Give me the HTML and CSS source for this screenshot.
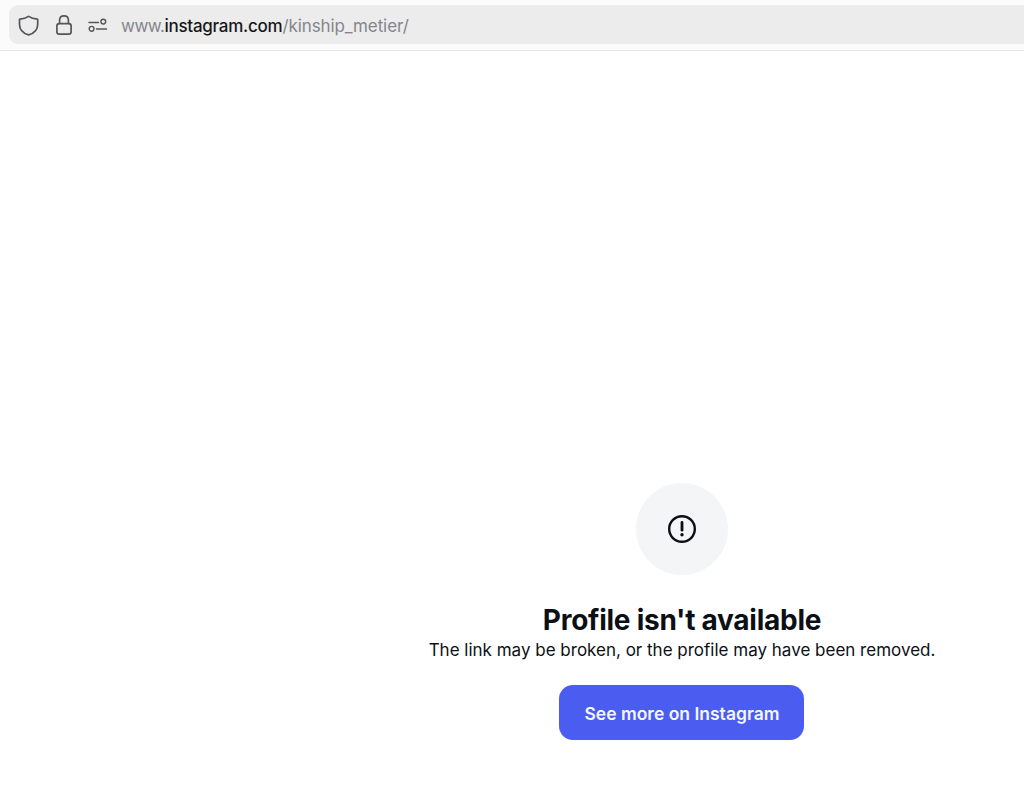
FILE: index.html
```html
<!DOCTYPE html>
<html lang="en">
<head>
<meta charset="utf-8">
<title>Profile isn't available</title>
<link rel="stylesheet" href="styles.css">
</head>
<body>
<header class="toolbar">
  <div class="urlbar">
    <svg class="icon shield" width="22" height="22" viewBox="0 0 22 22" fill="none"><path d="M10.6 2.4 C12.8 3.9 15.8 4.9 19.3 5.2 C19.6 5.2 19.7 5.4 19.7 5.7 V10.4 C19.7 15.4 16 19.2 10.6 20.9 C5.2 19.2 1.5 15.4 1.5 10.4 V5.7 C1.5 5.4 1.6 5.2 1.9 5.2 C5.4 4.9 8.4 3.9 10.6 2.4 Z" stroke="#55555a" stroke-width="1.7" stroke-linejoin="round"/></svg>
    <svg class="icon lock" width="18" height="22" viewBox="0 0 18 22" fill="none"><rect x="1.9" y="9.6" width="14.2" height="10.6" rx="2.4" stroke="#55555a" stroke-width="1.7"/><path d="M4.6 9.6 V6.2 C4.6 3.6 6.5 1.9 9 1.9 C11.5 1.9 13.4 3.6 13.4 6.2 V9.6" stroke="#55555a" stroke-width="1.7"/></svg>
    <svg class="icon perms" width="20" height="16" viewBox="0 0 20 16" fill="none"><path d="M1 5.4 H10.5 M8.5 12 H18.5" stroke="#55555a" stroke-width="1.5" stroke-linecap="round"/><circle cx="15.3" cy="4.6" r="2.4" stroke="#55555a" stroke-width="1.4"/><circle cx="3.6" cy="11.8" r="2.4" stroke="#55555a" stroke-width="1.4"/></svg>
    <div class="url"><span class="dim www">www.</span><span class="host">instagram.com</span><span class="dim path">/kinship_metier/</span></div>
  </div>
</header>
<main class="content">
  <div class="notice">
    <div class="badge">
      <svg width="30" height="30" viewBox="0 0 30 30" fill="none"><circle cx="15" cy="15" r="12.8" stroke="#0c1014" stroke-width="2.4"/><path d="M15 8.4 V16.2" stroke="#0c1014" stroke-width="2.8" stroke-linecap="round"/><circle cx="15" cy="20.8" r="1.7" fill="#0c1014"/></svg>
    </div>
    <h1 class="title">Profile isn't available</h1>
    <p class="text">The link may be broken, or the profile may have been removed.</p>
    <a class="button" href="#">See more on Instagram</a>
  </div>
</main>
</body>
</html>
```
FILE: styles.css
```css
html, body {
  margin: 0;
  padding: 0;
  height: 798px;
  overflow: hidden;
  background: #ffffff;
  font-family: Inter, "Liberation Sans", sans-serif;
}
.toolbar {
  box-sizing: border-box;
  height: 51px;
  padding: 5px 0 6px 9px;
  background: #fbfbfb;
  border-bottom: 1px solid #e6e6e6;
}
.urlbar {
  box-sizing: border-box;
  height: 39px;
  display: flex;
  align-items: center;
  padding-left: 9px;
  background: #ececec;
  border-radius: 9px 0 0 9px;
}
.icon { flex: none; display: block; }
.lock { margin-left: 15px; }
.perms { margin-left: 15px; }
.url {
  margin: 2px 0 0 13px;
  font-size: 17px;
  letter-spacing: -0.15px;
  white-space: nowrap;
}
.dim { color: #85858c; }
.www { letter-spacing: -0.5px; }
.host { color: #17171a; font-weight: 500; letter-spacing: -0.25px; }
.path { letter-spacing: -0.1px; }
.content {
  display: flex;
  justify-content: center;
  padding: 432px 0 0 340px;
}
.notice {
  display: flex;
  flex-direction: column;
  align-items: center;
}
.badge {
  width: 92px;
  height: 92px;
  border-radius: 50%;
  background: #f3f5f7;
  display: flex;
  align-items: center;
  justify-content: center;
}
.title {
  margin: 27px 0 0;
  font-size: 28px;
  line-height: 36px;
  font-weight: 700;
  letter-spacing: -0.26px;
  color: #0c1014;
}
.text {
  margin: 1px 0 0;
  font-size: 17px;
  line-height: 22px;
  color: #0c1014;
}
.button {
  margin-top: 24px;
  padding-top: 1px;
  box-sizing: border-box;
  width: 245px;
  height: 55px;
  display: flex;
  align-items: center;
  justify-content: center;
  background: #4a5df0;
  border-radius: 14px;
  color: #f5f6ff;
  font-size: 17.5px;
  font-weight: 600;
  text-decoration: none;
}
```
